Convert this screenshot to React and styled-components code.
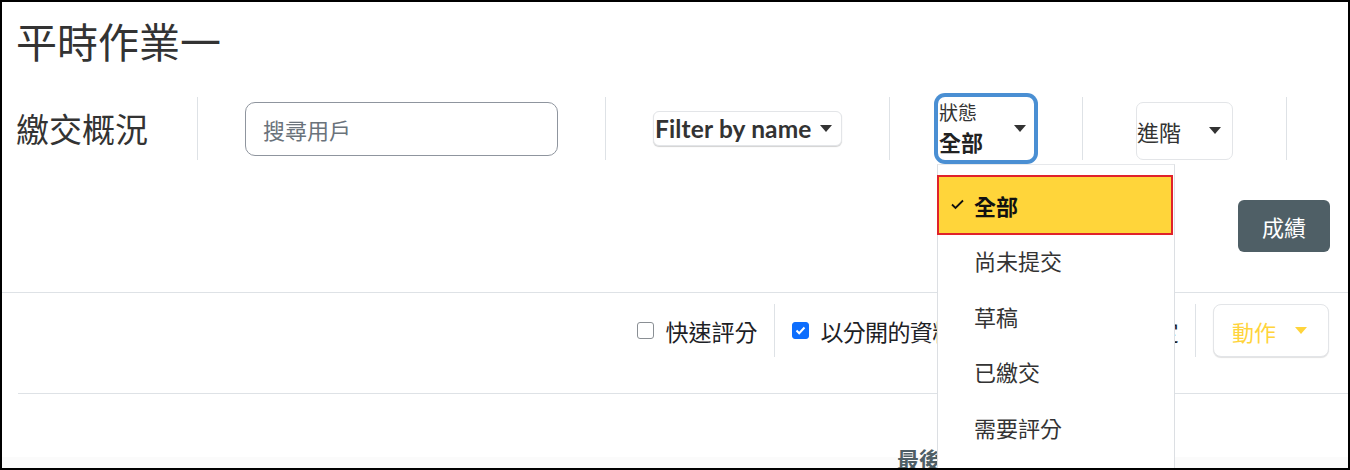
import styled, { createGlobalStyle } from 'styled-components'

const GlobalStyle = createGlobalStyle`
  html, body {
    margin: 0;
    padding: 0;
    background: #fff;
  }
  body {
    font-family: "Noto Sans CJK TC", "Noto Sans", sans-serif;
    color: #333;
  }
  * {
    box-sizing: border-box;
  }
`;

const Frame = styled.div`
  position: relative;
  width: 1350px;
  height: 470px;
  border: 2px solid #000;
  overflow: hidden;
  background: #fff;
`;

const Title = styled.h1`
  margin: 0;
  padding: 13px 0 0 14px;
  font-size: 41px;
  line-height: 50px;
  font-weight: 400;
  color: #333;
`;

const FilterRow = styled.div`
  display: flex;
  align-items: center;
  height: 71px;
  margin-top: 28px;
  padding-left: 14px;
`;

const SectionHeading = styled.h2`
  margin: 0;
  width: 134px;
  font-size: 33px;
  line-height: 1;
  font-weight: 400;
  color: #333;
`;

const Divider = styled.div`
  width: 1px;
  height: ${p => p.$tall || 63}px;
  background: #dee2e6;
  margin: 0 ${p => p.$space || 47}px;
  flex-shrink: 0;
`;

const SearchInput = styled.input`
  width: 313px;
  height: 54px;
  border: 1px solid #8f959e;
  border-radius: 10px;
  padding: 0 17px;
  font-family: inherit;
  font-size: 22px;
  color: #333;
  outline: none;
  &::placeholder {
    color: #6a737b;
  }
`;

const Caret = styled.span`
  display: inline-block;
  width: 0;
  height: 0;
  border-left: 6.5px solid transparent;
  border-right: 6.5px solid transparent;
  border-top: 7px solid ${p => p.$color || '#333'};
`;

const DropButton = styled.button`
  display: flex;
  align-items: center;
  gap: 8px;
  width: 189px;
  height: 35px;
  padding: 0 0 0 1px;
  background: #fff;
  border: 1px solid #e3e5e8;
  border-radius: 6px;
  box-shadow: 0 1px 1px rgba(0, 0, 0, 0.18);
  font-family: Lato, "Noto Sans CJK TC", sans-serif;
  font-weight: 700;
  font-size: 24.5px;
  letter-spacing: 0.15px;
  color: #333;
  white-space: nowrap;
`;

const StatusWrap = styled.div`
  position: relative;
  margin-left: 1px;
`;

const StatusSelect = styled.div`
  position: relative;
  width: 96px;
  height: 63px;
  border-radius: 7px;
  box-shadow: 0 0 0 4px #4a8fd3;
  background: #fff;
  padding: 3px 0 0 1px;
`;

const StatusLabel = styled.div`
  font-size: 19px;
  line-height: 23px;
  color: #333;
`;

const StatusValue = styled.div`
  margin-top: 6px;
  font-size: 22px;
  line-height: 25px;
  font-weight: 700;
  color: #222;
`;

const StatusCaret = styled(Caret)`
  position: absolute;
  right: 8px;
  top: 28px;
`;

const Menu = styled.ul`
  position: absolute;
  top: 67px;
  left: -1px;
  width: 238px;
  height: 320px;
  margin: 0;
  padding: 12px 3px 0 1px;
  list-style: none;
  background: #fff;
  border: 1px solid #dcdfe3;
  border-top-color: #e6e8eb;
  z-index: 10;
`;

const MenuItem = styled.li`
  position: relative;
  display: flex;
  align-items: center;
  height: 55.5px;
  padding-left: 35px;
  font-size: 22px;
  color: #333;
  ${p => p.$active && `
    background: #ffd53a;
    outline: 2px solid #e0222a;
    font-weight: 700;
    color: #111;
  `}
`;

const Check = styled.svg`
  position: absolute;
  left: 12px;
  top: 22px;
`;

const AdvButton = styled.button`
  display: flex;
  align-items: center;
  justify-content: space-between;
  width: 97px;
  height: 58px;
  margin: 4px 6px 0 5px;
  padding: 0 11px 0 0;
  background: #fff;
  border: 1px solid #e3e5e8;
  border-radius: 7px;
  font-family: inherit;
  font-size: 22px;
  color: #333;
`;

const GradeRow = styled.div`
  display: flex;
  justify-content: flex-end;
  margin-top: 36px;
  padding-right: 18px;
`;

const GradeButton = styled.button`
  width: 92px;
  height: 52px;
  background: #4f5f66;
  color: #fff;
  border: none;
  border-radius: 6px;
  font-family: inherit;
  font-size: 22px;
`;

const Rule = styled.hr`
  margin: ${p => p.$top}px 0 0 ${p => p.$inset || 0}px;
  border: none;
  border-top: 1px solid #dee2e6;
`;

const Toolbar = styled.div`
  display: flex;
  justify-content: flex-end;
  align-items: center;
  height: 53px;
  margin-top: 11px;
  padding-right: 19px;
`;

const CheckItem = styled.label`
  display: flex;
  align-items: center;
  gap: 11px;
  font-size: 23px;
  letter-spacing: ${p => p.$tight ? '-0.65px' : '0'};
  color: #1d2125;
  white-space: nowrap;
`;

const Box = styled.span`
  display: inline-flex;
  align-items: center;
  justify-content: center;
  width: 17px;
  height: 17px;
  border-radius: 3px;
  border: 1px solid ${p => (p.$checked ? '#0d6efd' : '#8a8f94')};
  background: ${p => (p.$checked ? '#0d6efd' : '#fff')};
`;

const ActionButton = styled.button`
  display: flex;
  align-items: center;
  gap: 19px;
  height: 53px;
  width: 116px;
  padding: 0 0 0 18px;
  background: #fff;
  border: 1px solid #e3e5e8;
  border-radius: 8px;
  box-shadow: 0 1px 1px rgba(0, 0, 0, 0.12);
  font-family: inherit;
  font-size: 22px;
  color: #ffd43b;
`;

const TableHead = styled.div`
  margin-top: 49px;
  padding-left: 895px;
  height: 30px;
  font-size: 22px;
  line-height: 30px;
  font-weight: 700;
  color: #4f5f66;
  white-space: nowrap;
  background: linear-gradient(#fff 0, #fff 14px, #fbfbfb 14px);
`;

const statusOptions = ['全部', '尚未提交', '草稿', '已繳交', '需要評分'];

export default function App() {
  return (
    <Frame>
      <GlobalStyle />
      <Title>平時作業一</Title>
      <FilterRow>
        <SectionHeading>繳交概況</SectionHeading>
        <Divider />
        <SearchInput placeholder="搜尋用戶" />
        <Divider />
        <DropButton>
          Filter by name <Caret />
        </DropButton>
        <Divider />
        <StatusWrap>
          <StatusSelect>
            <StatusLabel>狀態</StatusLabel>
            <StatusValue>全部</StatusValue>
            <StatusCaret />
          </StatusSelect>
          <Menu>
            {statusOptions.map((opt, i) => (
              <MenuItem key={opt} $active={i === 0}>
                {i === 0 && (
                  <Check width="13" height="11" viewBox="0 0 13 11">
                    <polyline points="1,5.5 4.5,9 12,1.5" fill="none" stroke="#111" strokeWidth="1.8" />
                  </Check>
                )}
                {opt}
              </MenuItem>
            ))}
          </Menu>
        </StatusWrap>
        <Divider $space={48} />
        <AdvButton>
          進階 <Caret />
        </AdvButton>
        <Divider />
      </FilterRow>
      <GradeRow>
        <GradeButton>成績</GradeButton>
      </GradeRow>
      <Rule $top={40} />
      <Toolbar>
        <CheckItem>
          <Box />
          快速評分
        </CheckItem>
        <Divider $tall={53} $space={17} />
        <CheckItem $tight>
          <Box $checked>
            <svg width="11" height="9" viewBox="0 0 11 9">
              <polyline points="1.5,4.5 4.2,7.2 9.5,1.5" fill="none" stroke="#fff" strokeWidth="2" />
            </svg>
          </Box>
          以分開的資料夾下載繳交的作業設定
        </CheckItem>
        <Divider $tall={53} $space={17} />
        <ActionButton>
          動作 <Caret $color="#ffd43b" />
        </ActionButton>
      </Toolbar>
      <Rule $top={36} $inset={16} />
      <TableHead>最後修改時間</TableHead>
    </Frame>
  );
}
